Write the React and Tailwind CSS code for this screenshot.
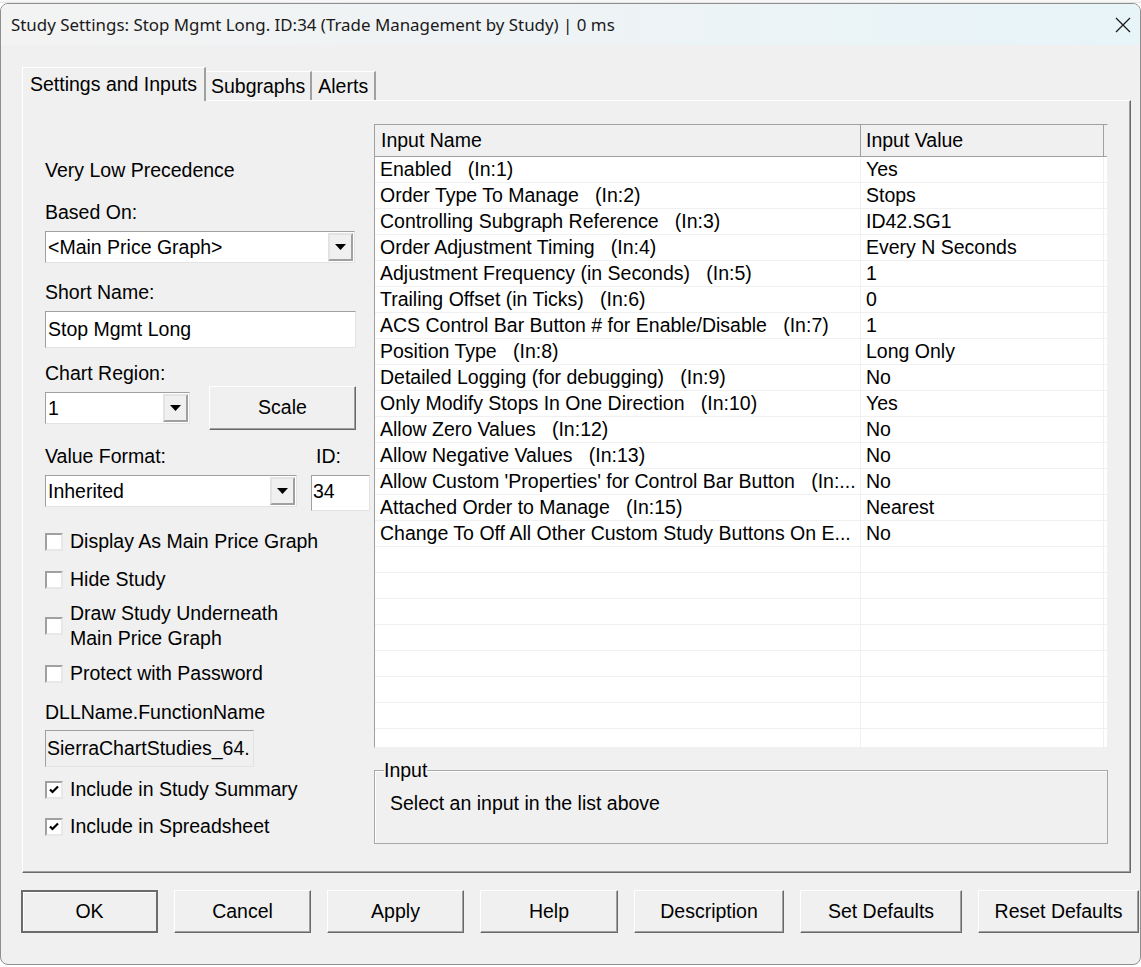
import React from 'react';

const inputs = [
  ['Enabled   (In:1)', 'Yes'],
  ['Order Type To Manage   (In:2)', 'Stops'],
  ['Controlling Subgraph Reference   (In:3)', 'ID42.SG1'],
  ['Order Adjustment Timing   (In:4)', 'Every N Seconds'],
  ['Adjustment Frequency (in Seconds)   (In:5)', '1'],
  ['Trailing Offset (in Ticks)   (In:6)', '0'],
  ['ACS Control Bar Button # for Enable/Disable   (In:7)', '1'],
  ['Position Type   (In:8)', 'Long Only'],
  ['Detailed Logging (for debugging)   (In:9)', 'No'],
  ['Only Modify Stops In One Direction   (In:10)', 'Yes'],
  ['Allow Zero Values   (In:12)', 'No'],
  ['Allow Negative Values   (In:13)', 'No'],
  ["Allow Custom 'Properties' for Control Bar Button   (In:...", 'No'],
  ['Attached Order to Manage   (In:15)', 'Nearest'],
  ['Change To Off All Other Custom Study Buttons On E...', 'No'],
  ['', ''], ['', ''], ['', ''], ['', ''], ['', ''], ['', ''], ['', ''], ['', ''], ['', ''],
];

const buttons = [
  ['OK', 'w-[137px]', true],
  ['Cancel', 'w-[137px]'],
  ['Apply', 'w-[137px]'],
  ['Help', 'w-[138px]'],
  ['Description', 'w-[150px]'],
  ['Set Defaults', 'w-[162px]'],
  ['Reset Defaults', 'w-[161px]'],
];

const Arrow = () => (
  <div className="w-[25px] h-full flex items-center justify-center bg-[#f0f0f0] border-2 border-t-[#e3e3e3] border-l-[#e3e3e3] border-b-[#a0a0a0] border-r-[#a0a0a0]">
    <svg width="11" height="6" viewBox="0 0 11 6"><path d="M0 0h11L5.5 6z" fill="#000" /></svg>
  </div>
);

const Combo = ({ value, className }) => (
  <div className={`h-[32px] flex items-stretch bg-white border border-t-[#a0a0a0] border-l-[#a0a0a0] border-b-[#e3e3e3] border-r-[#e3e3e3] p-[1px] ${className}`}>
    <span className="flex-1 pl-[1px] leading-[28px]">{value}</span>
    <Arrow />
  </div>
);

const Check = ({ checked, children }) => (
  <div className="flex items-center gap-[7px]">
    <div className="w-[18px] h-[18px] shrink-0 bg-white border-2 border-t-[#a0a0a0] border-l-[#a0a0a0] border-b-[#e8e8e8] border-r-[#e8e8e8] flex items-center justify-center">
      {checked && (
        <svg width="10" height="9" viewBox="0 0 10 9">
          <path d="M1 4.5l2.5 2.5L9 1.5" stroke="#000" strokeWidth="2.2" fill="none" />
        </svg>
      )}
    </div>
    <div className="leading-[25px]">{children}</div>
  </div>
);

export default function App() {
  return (
    <div className="w-[1141px] h-[967px] bg-white overflow-hidden text-black" style={{ fontFamily: '"Liberation Sans", Arial, sans-serif' }}>
      <div className="h-[3px] bg-[#f7f7f7] border-b border-[#e4e4e4]" />
      <div className="h-[962px] flex flex-col border border-[#8f8f8f] rounded-t-[8px] rounded-b-[8px] overflow-hidden bg-[#f0f0f0]">
        <div className="h-[41px] shrink-0 flex items-center justify-between pl-[10px] pr-[8px] bg-linear-to-r from-[#f3f3f3] via-[#eef3f5] to-[#e7f4f8]">
          <span className="text-[16.9px] text-[#1a1a1a]" style={{ fontFamily: '"Noto Sans", "Open Sans", sans-serif' }}>
            Study Settings: Stop Mgmt Long. ID:34 (Trade Management by Study) | 0 ms
          </span>
          <svg width="16" height="16" viewBox="0 0 16 16" className="mr-[1px]">
            <path d="M1 1l14 14M15 1L1 15" stroke="#1a1a1a" strokeWidth="1.3" />
          </svg>
        </div>

        <div className="flex-1 pl-[21px] pt-[22px] text-[19.5px]">
          <div className="flex items-end h-[33px] relative z-10">
            <div className="h-[34px] px-[7px] pt-[1px] bg-[#f0f0f0] border-t border-l border-white border-r-2 border-r-[#a0a0a0] mb-[-1px] leading-[30px]">Settings and Inputs</div>
            <div className="h-[29px] px-[5px] border-t border-white border-r-2 border-r-[#a0a0a0] leading-[29px]">Subgraphs</div>
            <div className="h-[29px] px-[6px] border-t border-white border-r-2 border-r-[#a0a0a0] leading-[29px]">Alerts</div>
          </div>

          <div className="w-[1109px] h-[773px] flex border border-t-white border-l-white border-b-[#696969] border-r-[#696969] shadow-[inset_-1px_-1px_0_#a0a0a0]">
            <div className="w-[351px] pl-[22px] pt-[56px] shrink-0">
              <div className="leading-[26px]">Very Low Precedence</div>
              <div className="leading-[26px] mt-[16px]">Based On:</div>
              <Combo value="<Main Price Graph>" className="w-[310px] mt-[6px]" />
              <div className="leading-[26px] mt-[16px]">Short Name:</div>
              <div className="w-[311px] h-[37px] mt-[6px] bg-white border border-t-[#a0a0a0] border-l-[#a0a0a0] border-b-[#e3e3e3] border-r-[#e3e3e3] pl-[2px] leading-[34px]">Stop Mgmt Long</div>
              <div className="leading-[25px] mt-[13px]">Chart Region:</div>
              <div className="h-[44px] flex items-center gap-[19px]">
                <Combo value="1" className="w-[145px]" />
                <div className="w-[147px] h-[44px] flex items-center justify-center border border-t-white border-l-white border-b-[#696969] border-r-[#696969] shadow-[inset_-1px_-1px_0_#a0a0a0]">Scale</div>
              </div>
              <div className="flex mt-[13px] leading-[26px]">
                <span className="w-[271px]">Value Format:</span>
                <span>ID:</span>
              </div>
              <div className="flex items-start gap-[14px] mt-[6px]">
                <Combo value="Inherited" className="w-[252px]" />
                <div className="w-[59px] h-[36px] bg-white border border-t-[#a0a0a0] border-l-[#a0a0a0] border-b-[#e3e3e3] border-r-[#e3e3e3] pl-[1px] leading-[30px]">34</div>
              </div>
              <div className="mt-[18px]"><Check>Display As Main Price Graph</Check></div>
              <div className="mt-[13px]"><Check>Hide Study</Check></div>
              <div className="mt-[9px]"><Check>Draw Study Underneath<br />Main Price Graph</Check></div>
              <div className="mt-[10px]"><Check>Protect with Password</Check></div>
              <div className="leading-[26px] mt-[13px]">DLLName.FunctionName</div>
              <div className="w-[209px] h-[37px] mt-[5px] bg-[#f0f0f0] border border-t-[#a0a0a0] border-l-[#a0a0a0] border-b-[#e3e3e3] border-r-[#e3e3e3] pl-[1px] leading-[34px] whitespace-nowrap overflow-hidden">SierraChartStudies_64.</div>
              <div className="mt-[10px]"><Check checked>Include in Study Summary</Check></div>
              <div className="mt-[12px]"><Check checked>Include in Spreadsheet</Check></div>
            </div>

            <div className="w-[734px] pt-[23px]">
              <div className="h-[624px] overflow-hidden bg-white border border-t-[#a0a0a0] border-l-[#a0a0a0] border-b-[#f0f0f0] border-r-[#f0f0f0]">
                <div className="h-[32px] flex bg-[#f0f0f0] border-b border-[#a0a0a0]">
                  <div className="w-[486px] pl-[6px] leading-[30px] border-r border-[#a0a0a0]">Input Name</div>
                  <div className="w-[243px] pl-[5px] leading-[30px] border-r border-[#a0a0a0]">Input Value</div>
                </div>
                {inputs.map(([name, value], i) => (
                  <div key={i} className="h-[26px] flex border-b border-[#f0f0f0]">
                    <div className="w-[486px] pl-[5px] leading-[25px] whitespace-pre overflow-hidden border-r border-[#f0f0f0]">{name}</div>
                    <div className="w-[243px] pl-[5px] leading-[25px] whitespace-pre border-r border-[#f0f0f0]">{value}</div>
                  </div>
                ))}
              </div>
              <fieldset className="mt-[12px] h-[84px] border border-[#a8a8a8] shadow-[inset_1px_1px_0_#fff] px-[15px]">
                <legend className="ml-[-6px] px-0 leading-[20px]">Input</legend>
                <div className="leading-[26px] mt-[10px]">Select an input in the list above</div>
              </fieldset>
            </div>
          </div>

          <div className="flex gap-[16px] mt-[17px] ml-[-1px]">
            {buttons.map(([label, w, def]) => (
              <div
                key={label}
                className={`${w} h-[43px] flex items-center justify-center ${def ? 'border-2 border-[#6b6b6b] shadow-[inset_1px_1px_0_#fff]' : 'border border-t-white border-l-white border-b-[#696969] border-r-[#696969] shadow-[inset_-1px_-1px_0_#a0a0a0]'}`}
              >
                {label}
              </div>
            ))}
          </div>
        </div>
      </div>
    </div>
  );
}
